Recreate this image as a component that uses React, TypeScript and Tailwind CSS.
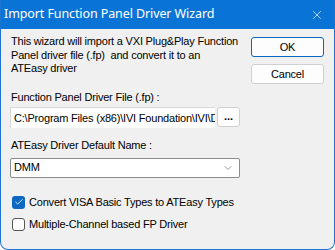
import { ChevronDown, Check, X } from "lucide-react";

const sans = "font-['Liberation_Sans',Arial,sans-serif]";

export default function App() {
  return (
    <div className="w-[335px] h-[250px] bg-white">
      <div className="w-[335px] h-[250px] flex flex-col border-x border-b border-[#1c74d0] rounded-b-[8px] overflow-hidden bg-[#f0f0f0]">
        {/* Title bar */}
        <div className="h-[29px] shrink-0 bg-[#0a74d6] flex items-center justify-between pl-[3px] pr-[10px] text-white">
          <span className="text-[12.5px] font-['Noto_Sans',sans-serif] tracking-[-0.1px]">
            Import Function Panel Driver Wizard
          </span>
          <X className="w-[14px] h-[14px]" strokeWidth={1.2} />
        </div>

        {/* Body */}
        <div className={`flex flex-1 pl-[9px] pr-[9px] pt-[6px] text-[11px] tracking-[-0.2px] text-black ${sans}`}>
          <div className="w-[230px] flex flex-col">
            <p className="leading-[13.5px] pl-[1px]">
              This wizard will import a VXI Plug&amp;Play Function Panel driver file (.fp)&nbsp; and convert it to an
              <br />
              ATEasy driver
            </p>

            <div className="mt-[15px] leading-[13.5px] pl-[1px]">Function Panel Driver File (.fp) :</div>
            <div className="mt-[3px] flex gap-[2px] items-start">
              <div className="w-[205px] h-[21px] bg-white border-l border-t border-[#d8d8d8] flex items-center pl-[3px] overflow-hidden whitespace-nowrap">
                C:\Program Files (x86)\IVI Foundation\IVI\Drivers
              </div>
              <div className="w-[23px] h-[20px] bg-[#fdfdfd] border border-[#d0d0d0] rounded-[3px] flex items-center justify-center font-bold leading-none pb-[2px] tracking-normal">
                ...
              </div>
            </div>

            <div className="mt-[11px] leading-[13.5px] pl-[1px]">ATEasy Driver Default Name :</div>
            <div className="mt-[5px] h-[20px] bg-white border border-[#8d8d8d] rounded-[2px] flex items-center justify-between pl-[3px] pr-[5px]">
              <span>DMM</span>
              <ChevronDown className="w-[12px] h-[12px] text-[#555]" strokeWidth={1.2} />
            </div>

            <div className="mt-[18px] flex items-center gap-[4px] pl-[2px]">
              <div className="w-[13px] h-[13px] rounded-[3px] bg-[#0a67c2] flex items-center justify-center">
                <Check className="w-[10px] h-[10px] text-white" strokeWidth={2} />
              </div>
              <span className="leading-[13.5px] whitespace-nowrap">Convert VISA Basic Types to ATEasy Types</span>
            </div>
            <div className="mt-[9px] flex items-center gap-[4px] pl-[2px]">
              <div className="w-[13px] h-[13px] rounded-[3px] bg-white border border-[#555]" />
              <span className="leading-[13.5px]">Multiple-Channel based FP Driver</span>
            </div>
          </div>

          <div className="ml-[11px] w-[73px] flex flex-col pt-[2px] gap-[7px]">
            <div className="h-[20px] bg-[#fdfdfd] border border-[#0a67c2] rounded-[3px] flex items-center justify-center">
              OK
            </div>
            <div className="h-[20px] bg-[#fdfdfd] border border-[#d0d0d0] rounded-[3px] flex items-center justify-center">
              Cancel
            </div>
          </div>
        </div>
      </div>
    </div>
  );
}
